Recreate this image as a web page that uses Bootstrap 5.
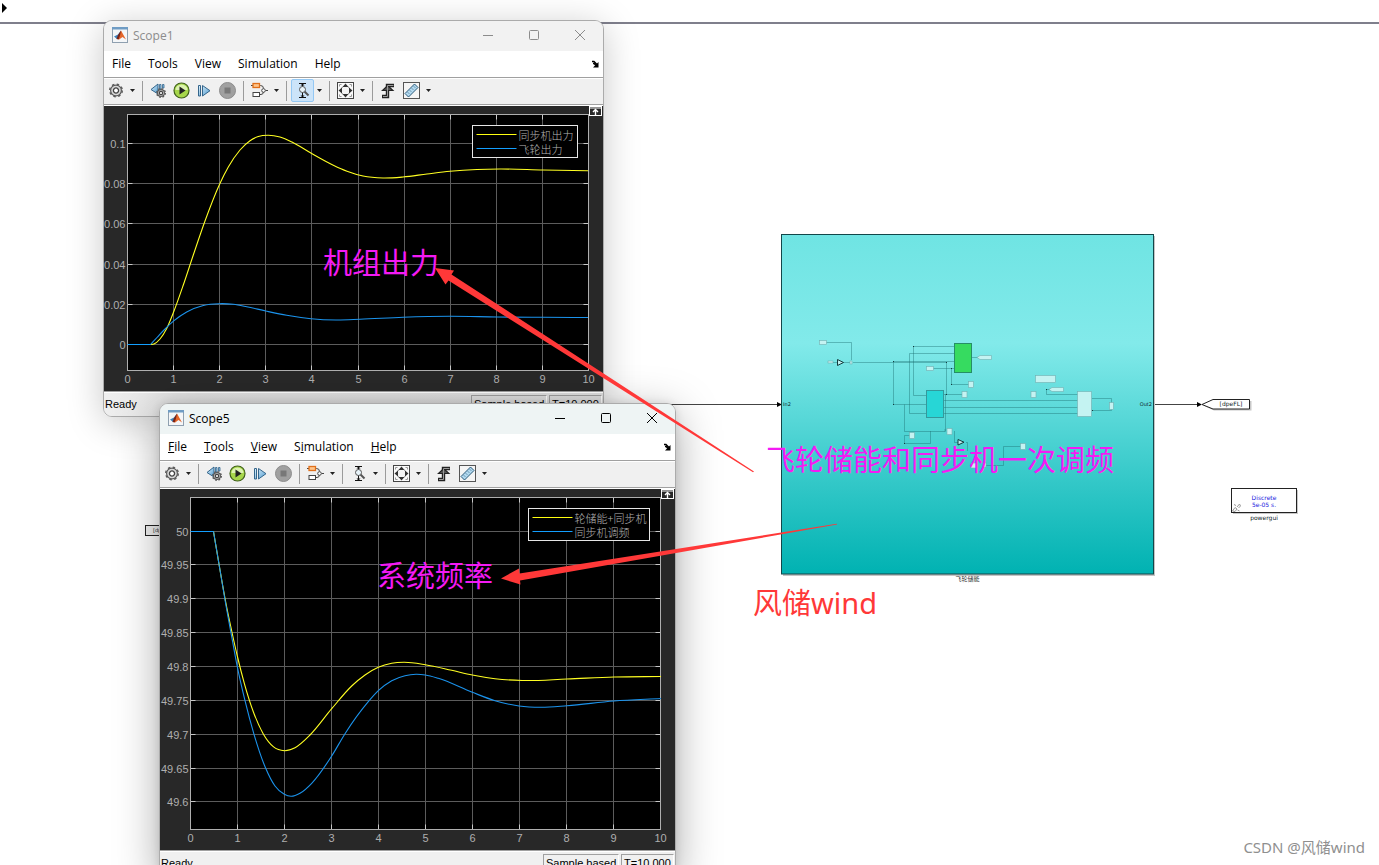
<!DOCTYPE html>
<html lang="en">
<head>
<meta charset="utf-8">
<meta name="viewport" content="width=device-width, initial-scale=1">
<title>Flywheel storage frequency model</title>
<link href="https://cdn.jsdelivr.net/npm/bootstrap@5.3.0/dist/css/bootstrap.min.css" rel="stylesheet">
<style>
  body { background: #fff; color: #000; font-family: "Open Sans", "Noto Sans CJK SC", sans-serif; font-size: 12px; }
  .desk { height: 100vh; }
  .desk-rule { height: 2px; background: #7f7f8c; margin-top: 22px; }
  .desk-layer { top: 0; left: 0; }
  .ink { pointer-events: none; }

  .scope { border: 1px solid #ababab; border-radius: 9px; background: #f0f0f0; overflow: hidden; }
  .scope-wrap { border-radius: 9px; box-shadow: 0 10px 44px rgba(0,0,0,.34), 0 0 8px rgba(0,0,0,.1); }
  .scope-one { left: 103px; top: 20px; width: 501px; box-shadow: 0 6px 36px rgba(0,0,0,.22); }
  .scope-five { left: 159px; top: 403px; width: 517px; }
  .titlebar { height: 30px; background: #f2f2f2; color: #8c8c8c; padding-left: 8px; padding-bottom: 2px; }
  .scope-five .titlebar { background: #eef4f4; color: #000; }
  .titlename { padding: 2px 0 0 1px; }
  .winbtn { width: 46px; height: 28px; border: 0; background: none; color: inherit; padding: 0; }
  .winbtn svg { display: block; margin: auto; }
  .menubar { height: 27px; background: #fff; border-bottom: 1px solid #a0a0a0; }
  .menubar button { border: 0; background: none; padding: 0 9px 0 8px; font-size: 12px; line-height: 24px; color: #000; }
  .menubar .dockbtn { padding: 0 4px; line-height: 0; }
  .toolbar { height: 27px; border-bottom: 1px solid #a0a0a0; box-shadow: inset 0 1px #fff; padding-top: 1px; }
  .tool { width: 23px; height: 23px; padding: 0; border: 1px solid transparent; border-radius: 2px; background: none; line-height: 0; color: #000; }
  .tool svg, .tool-drop svg { display: block; margin: auto; }
  .tool.on { background: #cce4f9; border-color: #94c8f4; }
  .tool-drop { width: 11px; height: 23px; padding: 0; border: 0; background: none; }
  .toolsep { width: 1px; height: 20px; background: #9b9b9b; margin: 2px 4px 0; }
  .plot { display: block; width: 100%; background: #282828; }
  .plot-edge { height: 1px; background: #fff; }
  .plot text { font: 11px "Liberation Sans", sans-serif; fill: #afafaf; }
  .plot text.legend-name { font: 11px "Noto Sans CJK SC", sans-serif; font-weight: 300; fill: #b4b4b4; }
  .statusbar { height: 25px; border-top: 1px solid #a0a0a0; font: 11px/14px "Liberation Sans", sans-serif; color: #000; padding: 3px 0 4px 1px; box-shadow: inset 0 1px #fff; }
  .scope-one .statusbar { background: linear-gradient(90deg, #efefef 0, #e2e2e2 70px, #dedede 100%); }
  .statready { padding-top: 2px; }
  .statcell { height: 18px; border: 1px solid; border-color: #a0a0a0 #fff #fff #a0a0a0; padding: 1px 2px; white-space: nowrap; flex: none; }
  .statmode { width: 76px; margin-right: 2px; }
  .stattime { width: 53px; margin-right: 1px; }

  .note { font: 29px/40px "Noto Sans CJK SC", sans-serif; color: #f41af4; white-space: nowrap; }
  .note-a { left: 323px; top: 241px; }
  .note-b { left: 377px; top: 554px; }
  .note-c { left: 766px; top: 438px; }
  .note-d { left: 753px; top: 583px; color: #ff3838; font-family: "Noto Sans", "Noto Sans CJK SC", sans-serif; }
  .watermark { right: 14px; bottom: 8px; font: 15px/20px "Noto Sans", "Noto Sans CJK SC", sans-serif; color: #8f8f8f; }
</style>
</head>
<body>

<svg class="position-absolute" width="0" height="0" aria-hidden="true">
  <defs>
    <linearGradient id="blueGlass" x1="0" y1="0" x2="1" y2="1"><stop offset="0" stop-color="#e4f4fc"/><stop offset="1" stop-color="#4f9bd0"/></linearGradient>
  </defs>
</svg>

<main class="desk position-relative overflow-hidden">
  <div class="desk-layer position-absolute w-100"><div class="desk-rule"></div></div>

  <svg class="desk-layer position-absolute" width="1379" height="865" aria-label="Block diagram">
    <defs>
      <linearGradient id="sea" x1="0" y1="0" x2="0" y2="1"><stop offset="0" stop-color="#6fe4e3"/><stop offset=".32" stop-color="#82eaea"/><stop offset=".75" stop-color="#2fc6c6"/><stop offset="1" stop-color="#00b2b2"/></linearGradient>
    </defs>
    <path d="M2 3l5 5-5 5z" fill="#000"/>
    <path d="M660 404.500H779M1154 404.500H1199" stroke="#444" fill="none"/>
    <path d="M777 402l5 2.500-5 2.500zM1197 402l5 2.500-5 2.500z" fill="#000"/>
    <rect x="783" y="236" width="372" height="340" fill="#c4c4c4"/>
    <rect x="781.5" y="234.500" width="372" height="339.500" fill="url(#sea)" stroke="#12474a"/>
    <g stroke="#1d6f73" stroke-opacity=".42" fill="none">
      <path d="M826 342.500H851.500V360M853 362.500H946.500V394.500H963M893.500 361.500V404.500H926M954 346.500H913.500V395.500H926M954 353.500H909.500V413.500H926M893 361.500H954M933 368.500H954M951.500 368.500V384.500H969M943 394.500H946M904.500 404.500V431.500H945V429M904.500 443.500V435.500H910M904.500 443.500H930.500V431M945.500 394V431.500M954.500 431V442.500H962M972 357.500H980M943 400.500H1078M943 407.500H1078M943 413.500H1078M1078 394.500H1046.500V389.500H1052M1092 398.500H1111.500V403M1092 410.500H1111.500V409M966 442.500H967.500V451M1021 446.500H1003.500V465.500H986"/>
      <path d="M830 362.500H850"/>
    </g>
    <path d="M893 361h1v1h-1zM913 346h1v1h-1zM946 362h1v1h-1zM893 404h1v1h-1zM951 368h1v1h-1zM951 384h1v1h-1zM946 394h1v1h-1zM943 400h1v1h-1zM943 407h1v1h-1zM943 413h1v1h-1zM1046 389h1v1h-1zM1092 410h1v1h-1zM904 443h1v1h-1z" fill="#123c3f"/>
    <g fill="#c4f3f2" stroke="#72aeb0" stroke-width=".6">
      <rect x="819.5" y="340.500" width="7" height="4"/><rect x="828" y="361" width="5" height="2"/><rect x="850" y="361" width="2" height="3"/>
      <rect x="926.500" y="366.500" width="7" height="4"/><rect x="968.500" y="381.500" width="5" height="6"/><rect x="962" y="391.500" width="5" height="6"/>
      <rect x="1035.500" y="375.500" width="20" height="7"/><rect x="1031" y="391.500" width="5" height="6"/><rect x="1077.500" y="391.500" width="14" height="25"/>
      <rect x="1109.500" y="402.500" width="4" height="7"/><rect x="909.500" y="432.500" width="5" height="6"/><rect x="947" y="428.500" width="5" height="6"/>
      <rect x="1020.500" y="443.500" width="5" height="6"/><rect x="971" y="463" width="6" height="5"/><rect x="983" y="463" width="3" height="4"/>
      <path d="M977 357.500l3-2h11.500v4H980zM1049 389.500l3-2h11.500v4H1052z"/>
    </g>
    <rect x="954.500" y="343.500" width="17" height="29" fill="#36db60" stroke="#258f66"/>
    <rect x="926.500" y="390.500" width="17" height="27" fill="#27d6d6" stroke="#33999c"/>
    <path d="M837.500 359.500v6l6-3zM958 439.500v5.500l6-2.800z" fill="#bdf0ef" stroke="#13393b"/>
    <g font-family="DejaVu Sans" font-size="5" fill="#10282a">
      <text x="783" y="406">In2</text><text x="1152" y="406" text-anchor="end">Out2</text>
      <path d="M1203 405.500l11-4.500h37.500v9.500h-37.500z" fill="#c8c8c8"/>
      <path d="M1202 404.500l11-5h36.500v9.500h-36.500z" fill="#fff" stroke="#222"/>
      <text x="1231" y="406" text-anchor="middle" font-size="6">[dpeFL]</text>
      <rect x="145.500" y="525.500" width="40" height="10" fill="#f2f2f2" stroke="#222"/><text x="153" y="532">[dpeFL]</text>
      <rect x="1233" y="490" width="65" height="24" fill="#c8c8c8"/>
      <rect x="1231.500" y="488.500" width="65" height="24" fill="#fff" stroke="#222"/>
      <g font-size="6" text-anchor="middle"><text x="1264" y="500" fill="#1a1ae0">Discrete</text><text x="1264" y="507" fill="#1a1ae0">5e-05 s.</text><text x="1264" y="520">powergui</text></g>
      <text x="967.500" y="581" font-size="6" text-anchor="middle" font-family="Noto Sans CJK SC" fill="#333">飞轮储能</text>
    </g>
    <path d="M1232.500 511l2.500-3.500 2 1.500-2 2.500zM1237 507l2.500-3 1 2-2 2M1234 504.500l2 1M1237.500 510l2 1" fill="none" stroke="#9a9a9a"/>
  </svg>

  <section class="scope-wrap scope-one position-absolute" aria-label="Scope1">
    <div class="scope d-flex flex-column">
      <div class="titlebar d-flex align-items-center gap-1" data-title="Scope1"></div>
      <nav class="menubar d-flex align-items-stretch"></nav>
      <div class="toolbar d-flex align-items-start" data-active="true"></div>
      <div class="plot-edge"></div>
      <svg class="plot" viewBox="0 0 499 285" aria-label="Unit output"></svg>
      <div class="statusbar d-flex align-items-start"><span class="statready me-auto">Ready</span><span class="statcell statmode">Sample based</span><span class="statcell stattime">T=10.000</span></div>
    </div>
  </section>

  <section class="scope-wrap scope-five position-absolute" aria-label="Scope5">
    <div class="scope d-flex flex-column">
      <div class="titlebar d-flex align-items-center gap-1" data-title="Scope5"></div>
      <nav class="menubar d-flex align-items-stretch" data-keys="true"></nav>
      <div class="toolbar d-flex align-items-start"></div>
      <div class="plot-edge"></div>
      <svg class="plot" viewBox="0 0 515 361" aria-label="System frequency"></svg>
      <div class="statusbar d-flex align-items-start"><span class="statready me-auto">Ready</span><span class="statcell statmode">Sample based</span><span class="statcell stattime">T=10.000</span></div>
    </div>
  </section>

  <svg class="desk-layer position-absolute ink" width="1379" height="865" aria-hidden="true">
    <g fill="#ff3838"><path d="M435 268l19 2.500-2.500 4L754 471.500l-1 .7L448.500 280.500l-3 4z"/><path d="M501 578.500l18-10 .5 5L837 523.800v.8L520 580.500l.5 4z"/></g>
  </svg>
  <div class="note note-a position-absolute">机组出力</div>
  <div class="note note-b position-absolute">系统频率</div>
  <div class="note note-c position-absolute">飞轮储能和同步机一次调频</div>
  <div class="note note-d position-absolute">风储wind</div>
  <div class="watermark position-absolute">CSDN @风储wind</div>
</main>

<script>
  // Toolbar glyphs, each on a 17 x 17 grid
  const gear = (x, y, r) => `<g transform="translate(${x} ${y})"><circle r="${r}" fill="#d8d8d8" stroke="#5a5a5a" stroke-width="1.200"/><circle r="${r + .9}" fill="none" stroke="#5a5a5a" stroke-width="1.400" stroke-dasharray="${(r + .9) * .3927} ${(r + .9) * .3927}"/><circle r="${r * .48}" fill="#fff" stroke="#444" stroke-width="1.300"/></g>`;
  const glyph = {
    gear: gear(9, 8.5, 5.4),
    back: `<path d="M8 2v10L1 7.500z" fill="url(#blueGlass)" stroke="#34658b"/><path d="M9.500 2.500h1.500V7H9.500zM12.500 2.500H14V6h-1.500z" fill="#8fc3e6" stroke="#34658b" stroke-width=".8"/>${gear(11, 11, 3.4)}`,
    run: `<circle cx="8.500" cy="8.500" r="7.500" fill="#a6d64a" stroke="#40611b" stroke-width="1.200"/><path d="M2.500 8a6 5.500 0 0 1 12 0z" fill="#dcf2b0"/><path d="M6.500 4.500v8l6-4z" fill="#222"/>`,
    forward: `<path d="M2.500 3.500h2v10.500h-2zM6.500 3.500L14 8.700l-7.500 5.300z" fill="url(#blueGlass)" stroke="#34658b"/>`,
    stop: `<circle cx="8.500" cy="8.500" r="8" fill="#a0a0a0" stroke="#8c8c8c"/><rect x="5.500" y="5.500" width="6" height="6" fill="#787878"/>`,
    signal: `<path d="M0 3.500h9.500q3 0 3 3M3 12.500h7q2.500 0 2.500-3M14.500 8.500H17" fill="none" stroke="#444"/><rect x="2" y="1.500" width="6.500" height="4" fill="#ffc58a" stroke="#e0701c" stroke-width="1.300"/><rect x="2" y="10.500" width="6.500" height="4" fill="#fff" stroke="#444"/><circle cx="12.500" cy="8.500" r="1.800" fill="#fff" stroke="#444"/>`,
    zoom: `<path d="M5 1.500h7M8.500 1v14M5 15.500h7" fill="none" stroke="#111"/><path d="M6.500 3.500l2-2 2 2zM6.500 13.500l2 2 2-2z" fill="#111"/><path d="M10.500 9.500l4 4" stroke="#555" stroke-width="2"/><circle cx="8.500" cy="7.500" r="3" fill="#e8f4fa" stroke="#555"/>`,
    fit: `<rect x=".5" y=".5" width="16" height="16" fill="#fafafa" stroke="#444"/><circle cx="8.500" cy="8.500" r="4.500" fill="#f4f4f4" stroke="#888" stroke-dasharray="3 4.070" stroke-dashoffset="-2"/><path d="M8.500 1.500l3 3.500h-6zM8.500 15.500l3-3.500h-6zM1.500 8.500L5 5.500v6zM15.500 8.500L12 5.500v6z" fill="#333"/><path d="M2.500 4.500v-2h2M12.500 2.500h2v2M14.500 12.500v2h-2M4.500 14.500h-2v-2" fill="none" stroke="#999"/>`,
    trigger: `<path d="M2 14.500h5.500V3.500H14" fill="none" stroke="#222" stroke-width="3.400"/><path d="M2.500 8.500l5.200-5 5.200 5z" fill="#555" stroke="#222" stroke-width="1.200"/><path d="M3 14.500h4.500V3.500H13.500" fill="none" stroke="#999" stroke-width="1"/>`,
    measure: `<rect x=".5" y=".5" width="16" height="16" fill="#f5f5f5" stroke="#555"/><path d="M2 11.500L11.500 2 15 5.500 5.500 15z" fill="#b4daf0" stroke="#285879"/><path d="M5 10.500l1 1M7 8.500l1 1M9 6.500L10 7.500M11 4.500L12 5.500" stroke="#285879"/>`
  };
  const tool = (n, label, on) => `<button type="button" class="tool${on ? ' on' : ''}" aria-label="${label}"><svg width="17" height="17">${glyph[n]}</svg></button>`;
  const drop = `<button type="button" class="tool-drop" aria-label="More"><svg width="5" height="3"><path d="M0 0h5L2.500 3z" fill="#222"/></svg></button>`;
  const sep = `<span class="toolsep"></span>`;
  document.querySelectorAll('.toolbar').forEach(t => {
    t.innerHTML = tool('gear', 'Settings') + drop + sep + tool('back', 'Step back') + tool('run', 'Run') + tool('forward', 'Step forward') + tool('stop', 'Stop') + sep +
      tool('signal', 'Signals') + drop + sep + tool('zoom', 'Zoom Y', t.dataset.active) + drop + sep + tool('fit', 'Fit to view') + drop + sep + tool('trigger', 'Triggers') + tool('measure', 'Measurements') + drop;
  });

  document.querySelectorAll('.menubar').forEach(m => {
    const k = m.dataset.keys;
    m.innerHTML = ['<u>F</u>ile', '<u>T</u>ools', '<u>V</u>iew', 'S<u>i</u>mulation', '<u>H</u>elp']
      .map(s => `<button type="button">${k ? s : s.replace(/<\/?u>/g, '')}</button>`).join('') +
      `<button type="button" class="dockbtn ms-auto" aria-label="Dock"><svg width="8" height="8"><path d="M1 1.500h2l3 3M2 3.500h1l2 2" fill="none" stroke="#000" stroke-width="1.300"/><path d="M7.500 2v5.500H2z"/></svg></button>`;
  });

  document.querySelectorAll('.titlebar').forEach(t => {
    const win = (label, d) => `<button type="button" class="winbtn" aria-label="${label}"><svg width="12" height="12" fill="none" stroke="currentColor">${d}</svg></button>`;
    t.innerHTML = `<svg width="16" height="16"><rect x=".5" y=".5" width="15" height="15" fill="#f4f6f8" stroke="#8fa0b0"/><rect x="0" y="0" width="16" height="2.500" fill="#6f9cc4"/><path d="M2 9.500L6 7.500l3-4-2 7-2 1.500z" fill="#3c7fb8"/><path d="M9 3.500L6 8l-1.500 4 2 .5L9.500 9z" fill="#7a2417"/><path d="M9 3.500l5 9-3.500-2.500L6.500 13 8 8.500z" fill="#e4662a"/></svg>
      <span class="titlename me-auto">${t.dataset.title}</span><span class="d-flex">` +
      win('Minimize', '<path d="M1 6.500h10"/>') + win('Maximize', '<rect x="1.500" y="1.500" width="9" height="9" rx="1"/>') + win('Close', '<path d="M1 1l10 10M11 1L1 11"/>') + '</span>';
  });

  // Smooth curve through unevenly spaced sample points
  function curve(p) {
    const n = p.length, w = [], s = [], m = [];
    for (let i = 0; i < n - 1; i++) { w.push(p[i + 1][0] - p[i][0]); s.push((p[i + 1][1] - p[i][1]) / w[i]); }
    for (let i = 0; i < n; i++) m.push(i === 0 ? s[0] : i === n - 1 ? s[n - 2] : (s[i - 1] * w[i] + s[i] * w[i - 1]) / (w[i] + w[i - 1]));
    let d = `M${p[0]}`;
    for (let i = 0; i < n - 1; i++) {
      const h = w[i] / 3;
      d += `C${p[i][0] + h} ${p[i][1] + m[i] * h} ${p[i + 1][0] - h} ${p[i + 1][1] - m[i + 1] * h} ${p[i + 1]}`;
    }
    return d;
  }

  function draw(svg, c) {
    const { l, t, r, b } = c.box, step = (r - l) / 10;
    let grid = '', tick = '', text = '';
    for (let i = 0; i <= 10; i++) {
      const x = Math.floor(l + i * step) + .5;
      if (i && i < 10) { grid += `M${x} ${t}V${b}`; tick += `M${x} ${t}v5M${x} ${b}v-5`; }
      text += `<text x="${x}" y="${b + 12.5}" text-anchor="middle">${i}</text>`;
    }
    c.ticks.forEach(([name, y]) => {
      grid += `M${l} ${y}H${r}`; tick += `M${l} ${y}h5M${r} ${y}h-5`;
      text += `<text x="${l - 2}" y="${y + 4}" text-anchor="end">${name}</text>`;
    });
    const g = c.legend;
    svg.innerHTML = `<rect x="${l}" y="${t}" width="${r - l}" height="${b - t}"/><path d="${grid}" stroke="#5c5c5c"/>
      <g fill="none"><path d="${tick}" stroke="#c8c8c8"/><rect x="${l}" y="${t}" width="${r - l}" height="${b - t}" stroke="#afafaf"/>
      <path d="${curve(c.yellow)}" stroke="#ffff22" stroke-width="1.100"/><path d="${curve(c.blue)}" stroke="#1b93ec" stroke-width="1.100"/>
      <path d="M${l} ${c.blue[0][1]}H${c.blue[0][0]}" stroke="#139fff"/></g>${text}
      <rect x="${g.x}" y="${g.y}" width="${g.w}" height="32" stroke="#e6e6e6"/>
      <path d="M${g.x + 4} ${g.y + 9}h40" stroke="#ffff11"/><path d="M${g.x + 4} ${g.y + 23}h40" stroke="#139fff"/>
      <text class="legend-name" x="${g.x + 46}" y="${g.y + 14}">${g.names[0]}</text><text class="legend-name" x="${g.x + 46}" y="${g.y + 28}">${g.names[1]}</text>
      <g fill="none" stroke="#fff"><rect x="${r + 1}" y=".5" width="12" height="9" fill="#282828"/><path d="M${r + 1} 2h12"/><path d="M${r + 4.5} 6l2.500-2.500L${r + 9.5} 6M${r + 7} 4v5" stroke-width="1.400"/></g>`;
  }

  const shift = (dx, dy, pts) => pts.map(([x, y]) => [x - dx, y - dy]);
  const plots = document.querySelectorAll('.plot');
  draw(plots[0], {
    box: { l: 23.5, t: 8.5, r: 484.5, b: 264.5 },
    ticks: [['0.1', 37.5], ['0.08', 77.5], ['0.06', 117.5], ['0.04', 158.5], ['0.02', 198.5], ['0', 238.5]],
    legend: { x: 368.5, y: 19.5, w: 105, names: ['同步机出力', '飞轮出力'] },
    yellow: shift(104, 106, [[150.5,344.5],[154,344],[160,339],[166.7,328.5],[174,311],[183.3,285],[193.3,255],[205,221],[219.7,184],[228.3,167],[240,150],[250,140.7],[258.3,136.5],[268,135.2],[280,137],[292,142],[311.3,153.3],[333.3,165.200],[347,171.200],[363,176],[383,178],[403,177],[427,174],[450,171.3],[477,169.5],[500,169],[543,170],[588,170.7]]),
    blue: shift(104, 106, [[150.5,344.5],[157,337.5],[164,330],[174,320.7],[186.7,312],[203.3,305.5],[219,303.7],[233.3,304.3],[246.7,306.7],[265.7,311],[286.7,315.3],[311,318.7],[336,320],[360,319.3],[403,317.3],[450,316.3],[497,317],[543,317.3],[588,317.5]])
  });
  draw(plots[1], {
    box: { l: 30.5, t: 8.5, r: 500.5, b: 340.5 },
    ticks: [['50', 42.5], ['49.95', 75.5], ['49.9', 109.5], ['49.85', 143.5], ['49.8', 177.5], ['49.75', 211.5], ['49.7', 245.5], ['49.65', 279.5], ['49.6', 312.5]],
    legend: { x: 368.5, y: 19.5, w: 121, names: ['轮储能+同步机', '同步机调频'] },
    yellow: shift(160, 489, [[213.5,531.5],[220,570],[225.7,602],[231.7,631],[237.3,656],[244.3,683.3],[253.3,711.7],[263.3,734],[273.3,746.7],[284.5,750.7],[295,747.7],[310,735],[331.7,708.7],[351.7,686],[365,675],[378.3,667.3],[391.7,663.3],[404,662.3],[425.3,664.7],[451.7,670.3],[472.3,675],[495,678.7],[522,680.5],[567,679],[614,677],[661,676.5]]),
    blue: shift(160, 489, [[213.5,531.5],[220,570],[225.7,604],[231.7,636.7],[237.3,666.7],[245,700.7],[254,734.3],[265.7,768.3],[275,786],[284.3,794.3],[291,796.3],[300,793.3],[311.7,783.3],[331.7,756],[345,733.7],[368.3,701.7],[378.3,690.7],[391.7,680.7],[405,675.7],[416,674.3],[425.3,675],[438.3,678.3],[472.3,692.3],[495,700.7],[519,706],[541,707.3],[567,705.7],[614,701],[661,698.5]])
  });
</script>
<script src="https://cdn.jsdelivr.net/npm/bootstrap@5.3.0/dist/js/bootstrap.bundle.min.js"></script>
</body>
</html>
